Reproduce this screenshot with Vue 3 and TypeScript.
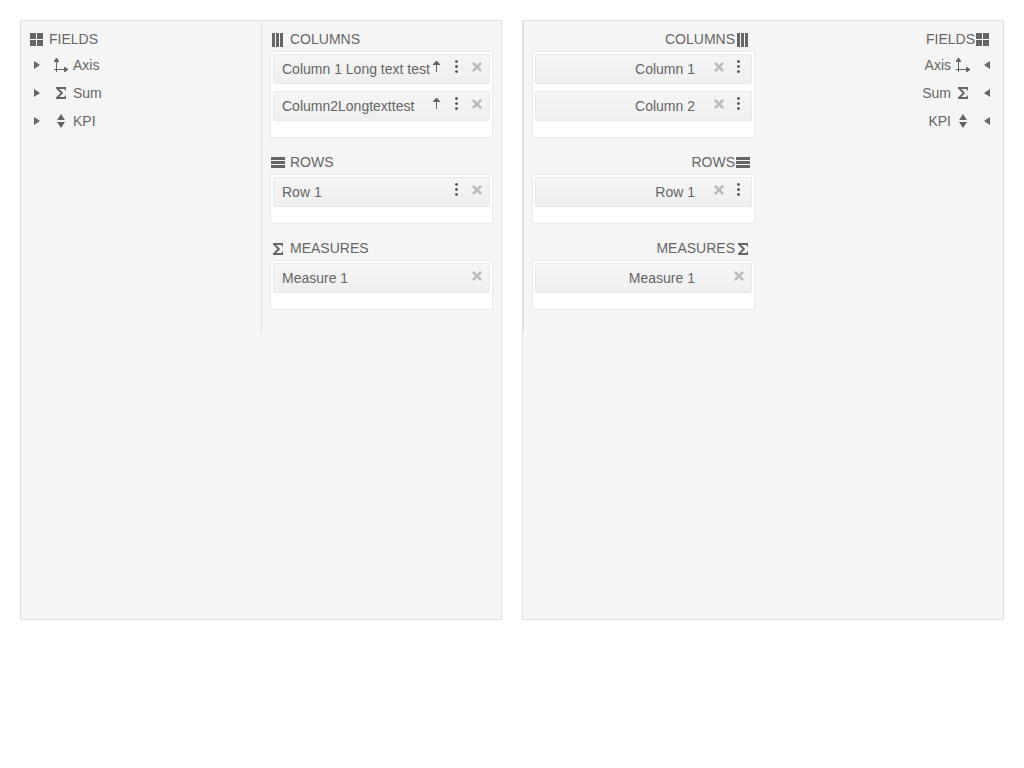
<script setup lang="ts">
import { h } from 'vue'
import type { FunctionalComponent } from 'vue'

type IconName =
  | 'grid' | 'columns' | 'rows' | 'sigma' | 'axis' | 'kpi'
  | 'expand' | 'collapse' | 'sort' | 'more' | 'close'

interface Item { text: string; sort?: boolean; menu?: boolean }
interface Group { title: string; icon: IconName; items: Item[] }
interface Configurator { id: string; dir: 'ltr' | 'rtl'; groups: Group[] }

const paths: Record<IconName, string> = {
  grid: 'M1 1h6v6h-6zM8 1h6v6h-6zM1 8h6v6h-6zM8 8h6v6h-6z',
  columns: 'M2 1h3v14h-3zM6 1h3v14h-3zM10 1h3v14h-3z',
  rows: 'M1 2h14v3h-14zM1 6h14v3h-14zM1 10h14v3h-14z',
  sigma: 'M3 2H13V5.5H12L11.5 4H6.2L9.8 7.5V8.5L6.2 12H11.5L12 10.5H13V14H3V12.5L7.5 8L3 3.5z',
  axis: 'M3 5H1V4L3 1H4L6 4V5H4V12H11V10H12L15 12V13L12 15H11V13H4V15H3V13H1V12H3z',
  kpi: 'M8 1L12 7H4zM4 9H12L8 15z',
  expand: 'M5 4L11 8L5 12z',
  collapse: 'M11 4L5 8L11 12z',
  sort: 'M7 2H8L11 5V6H8V13H7V6H4V5z',
  more: 'M7 1h1l1 1v1l-1 1h-1l-1-1v-1zM7 6h1l1 1v1l-1 1h-1l-1-1v-1zM7 11h1l1 1v1l-1 1h-1l-1-1v-1z',
  close: 'M3 4.8L4.8 3L8 6.2L11.2 3L13 4.8L9.8 8L13 11.2L11.2 13L8 9.8L4.8 13L3 11.2L6.2 8z',
}

const Icon: FunctionalComponent<{ name: IconName }> = (props) =>
  h(
    'svg',
    { width: 16, height: 16, viewBox: '0 0 16 16', fill: 'currentColor', 'aria-hidden': 'true' },
    [h('path', { d: paths[props.name] })],
  )
Icon.props = ['name']

const fields: { text: string; icon: IconName }[] = [
  { text: 'Axis', icon: 'axis' },
  { text: 'Sum', icon: 'sigma' },
  { text: 'KPI', icon: 'kpi' },
]

const sharedGroups: Group[] = [
  { title: 'ROWS', icon: 'rows', items: [{ text: 'Row 1', menu: true }] },
  { title: 'MEASURES', icon: 'sigma', items: [{ text: 'Measure 1' }] },
]

const configurators: Configurator[] = [
  {
    id: 'start',
    dir: 'ltr',
    groups: [
      {
        title: 'COLUMNS',
        icon: 'columns',
        items: [
          { text: 'Column 1 Long text test', sort: true, menu: true },
          { text: 'Column2Longtexttest', sort: true, menu: true },
        ],
      },
      ...sharedGroups,
    ],
  },
  {
    id: 'end',
    dir: 'rtl',
    groups: [
      {
        title: 'COLUMNS',
        icon: 'columns',
        items: [{ text: 'Column 1', menu: true }, { text: 'Column 2', menu: true }],
      },
      ...sharedGroups,
    ],
  },
]
</script>

<template>
  <main class="page">
    <section v-for="c in configurators" :key="c.id" class="configurator" :class="c.dir" :dir="c.dir">
      <div class="fields">
        <h2 class="heading"><Icon name="grid" /><span>FIELDS</span></h2>
        <ul class="tree">
          <li v-for="f in fields" :key="f.text" class="node">
            <button type="button" class="icon-button toggle" :aria-label="`Expand ${f.text}`">
              <Icon :name="c.dir === 'ltr' ? 'expand' : 'collapse'" />
            </button>
            <Icon :name="f.icon" />
            <span>{{ f.text }}</span>
          </li>
        </ul>
      </div>
      <div class="settings">
        <div v-for="g in c.groups" :key="g.title" class="group">
          <h2 class="heading"><Icon :name="g.icon" /><span>{{ g.title }}</span></h2>
          <ul class="targets">
            <li v-for="item in g.items" :key="item.text" class="item">
              <span class="label">{{ item.text }}</span>
              <span class="actions">
                <button v-if="item.sort" type="button" class="icon-button" :aria-label="`Sort ${item.text}`">
                  <Icon name="sort" />
                </button>
                <button v-if="item.menu" type="button" class="icon-button" :aria-label="`Options for ${item.text}`">
                  <Icon name="more" />
                </button>
                <button type="button" class="icon-button close" :aria-label="`Remove ${item.text}`">
                  <Icon name="close" />
                </button>
              </span>
            </li>
          </ul>
        </div>
      </div>
    </section>
  </main>
</template>

<style>
body {
  margin: 0;
  background: #fff;
}
</style>

<style scoped>
.page {
  display: flex;
  gap: 20px;
  padding: 20px;
  color: #656565;
  font: 14px/20px "Liberation Sans", Arial, sans-serif;
}

.configurator {
  display: flex;
  flex: 1;
  align-items: flex-start;
  box-sizing: border-box;
  min-width: 0;
  min-height: 600px;
  border: 1px solid #e1e1e1;
  background: #f5f5f5;
}

.fields,
.settings {
  box-sizing: border-box;
  flex: 0 0 50%;
  min-width: 0;
  padding: 6px 8px 10px;
}

.settings {
  border-left: 1px solid #e1e1e1;
}

.heading {
  display: flex;
  align-items: center;
  gap: 4px;
  height: 24px;
  margin: 0;
  font-size: 14px;
  font-weight: normal;
}

.heading svg {
  margin-top: 2px;
}

.rtl .heading {
  gap: 0;
  padding-inline-start: 4px;
}

svg {
  display: block;
  flex: none;
}

ul {
  margin: 0;
  padding: 0;
  list-style: none;
}

.node {
  display: flex;
  align-items: center;
  gap: 4px;
  height: 28px;
}

.icon-button {
  display: block;
  flex: none;
  width: 16px;
  height: 16px;
  padding: 0;
  border: 0;
  background: none;
  color: inherit;
  cursor: pointer;
}

.toggle {
  margin-inline-end: 4px;
}

.group {
  margin-bottom: 12px;
}

.targets {
  display: flex;
  flex-direction: column;
  gap: 7px;
  padding: 2px 2px 16px;
  border: 1px solid #ebebeb;
  background: #fff;
}

.item {
  display: flex;
  box-sizing: border-box;
  height: 30px;
  padding-inline: 8px 4px;
  border: 1px solid #e9e9e9;
  border-radius: 2px;
  background: linear-gradient(#f5f5f5, #efefef);
}

.rtl .item {
  padding-inline: 4px 8px;
}

.label {
  flex: 1;
  min-width: 0;
  line-height: 28px;
  white-space: nowrap;
}

.actions {
  display: flex;
  flex: none;
  justify-content: flex-end;
  gap: 4px;
  width: 56px;
  padding-top: 4px;
}

.rtl .actions {
  order: -1;
  justify-content: flex-start;
  width: 52px;
}

.close {
  color: #bbb;
}
</style>
